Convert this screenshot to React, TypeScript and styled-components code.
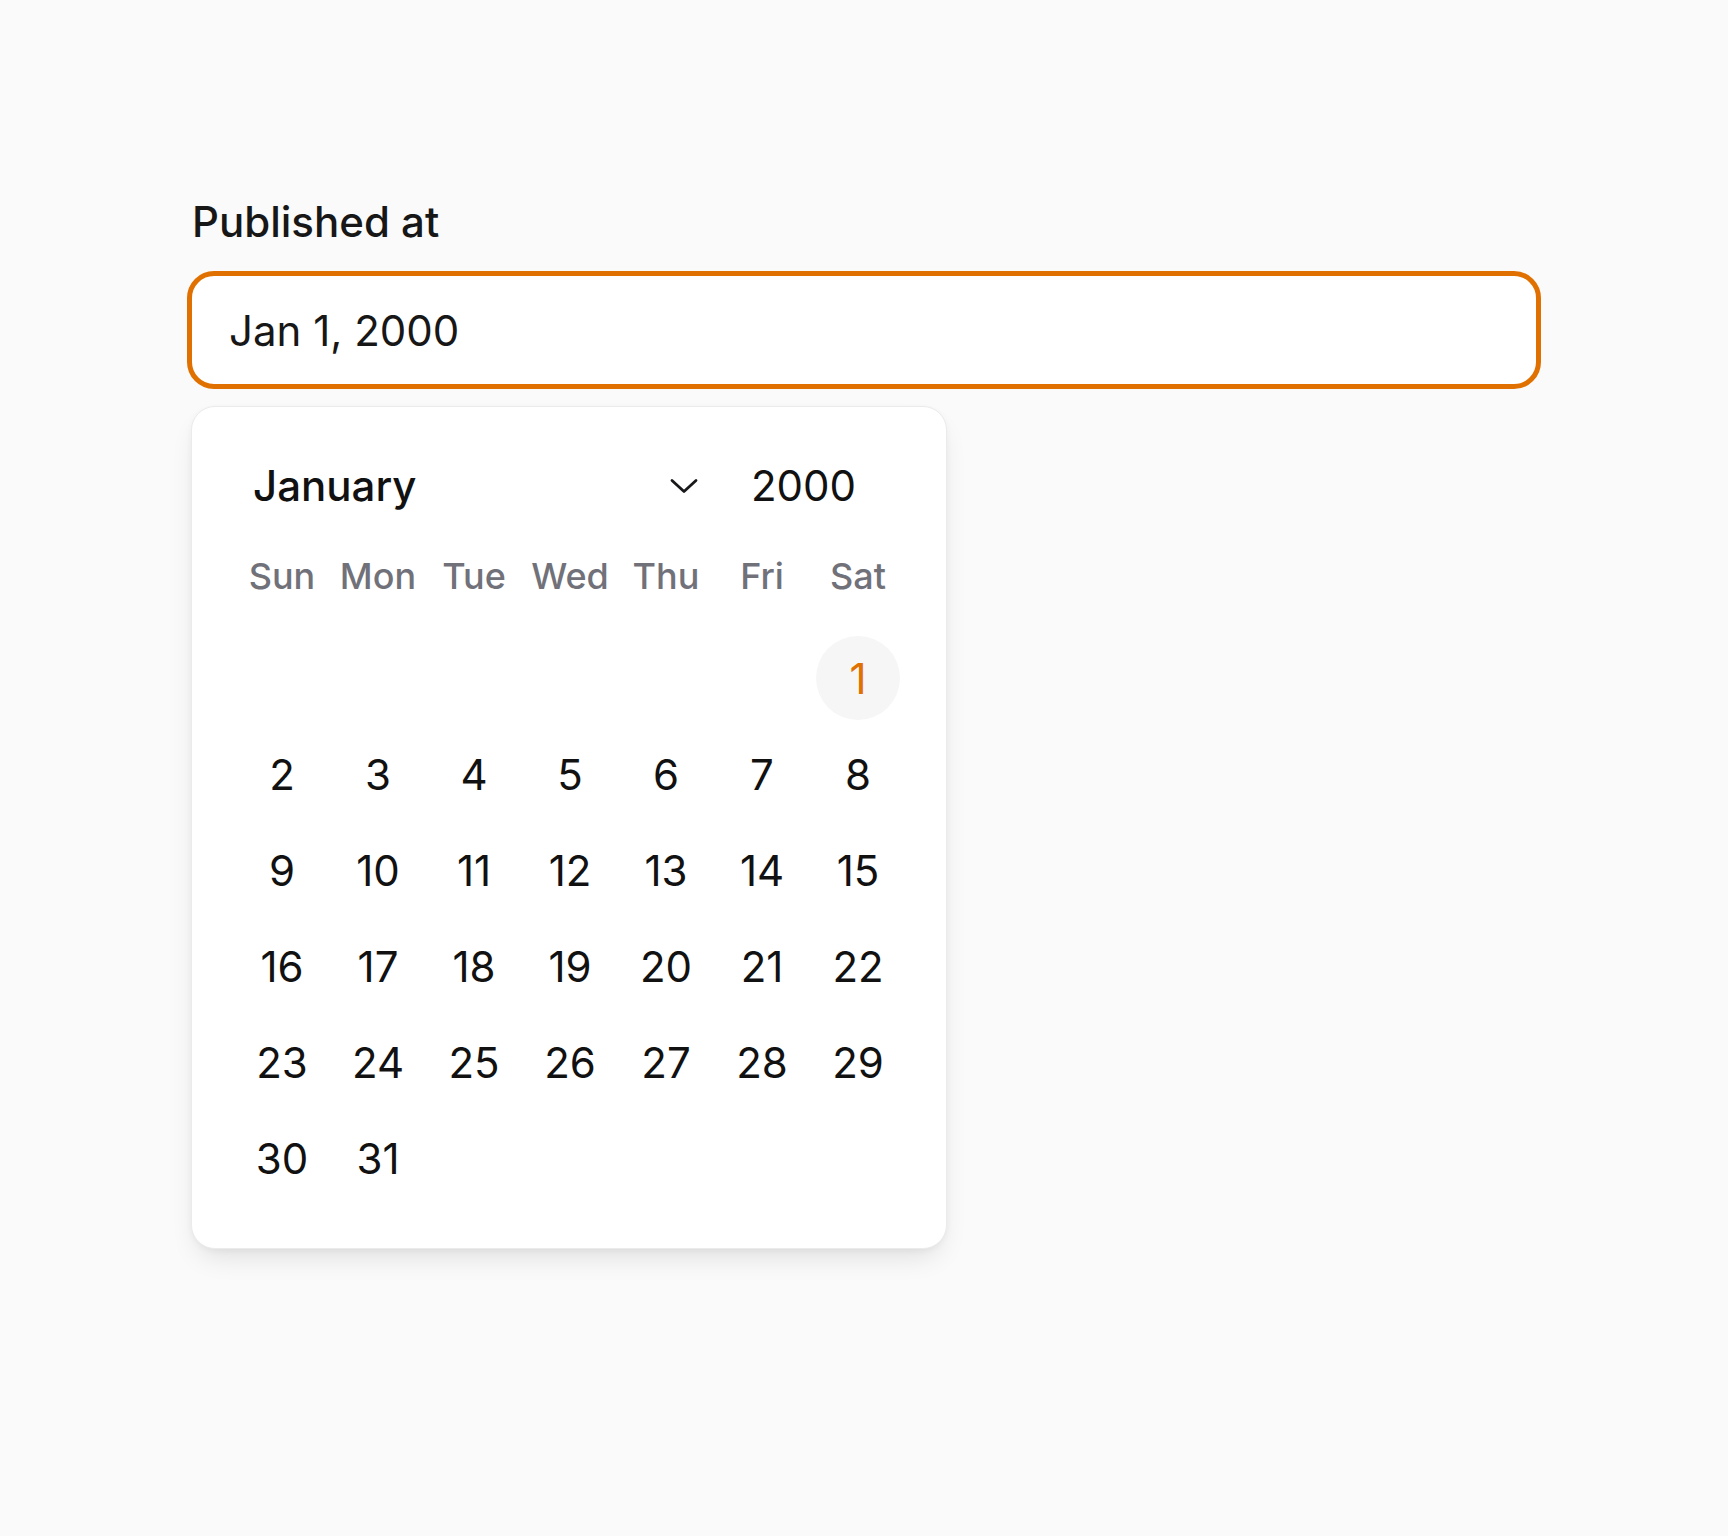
import React from "react";
import styled, { createGlobalStyle } from "styled-components";

const ORANGE = "#e07000";

const GlobalStyle = createGlobalStyle`
  html, body {
    margin: 0;
    padding: 0;
    background: #fafafa;
  }
  body {
    font-family: Inter, "Noto Sans", sans-serif;
    color: #171717;
    -webkit-font-smoothing: antialiased;
  }
  * { box-sizing: border-box; }
`;

const Page = styled.div`
  min-height: 1536px;
  padding: 192px 0 0 187px;
`;

const Field = styled.div`
  position: relative;
  width: 1354px;
  display: flex;
  flex-direction: column;
  gap: 19px;
`;

const Label = styled.label`
  padding-left: 5px;
  font-size: 42px;
  line-height: 60px;
  font-weight: 500;
  color: #171717;
`;

const Input = styled.div`
  height: 118px;
  display: flex;
  align-items: center;
  padding: 0 37px;
  background: #ffffff;
  border: 5px solid ${ORANGE};
  border-radius: 27px;
  font-size: 42px;
  font-weight: 400;
  color: #171717;
`;

const Popover = styled.div`
  position: absolute;
  top: calc(100% + 17px);
  left: 4px;
  width: 756px;
  padding: 49px 47px 48px 48px;
  background: #ffffff;
  border: 1px solid #ebebeb;
  border-radius: 24px;
  box-shadow: 0 14px 28px -8px rgba(0, 0, 0, 0.12), 0 2px 6px rgba(0, 0, 0, 0.04);
`;

const Header = styled.div`
  display: flex;
  align-items: center;
  height: 60px;
  margin-bottom: 36px;
`;

const MonthSelect = styled.div`
  width: 470px;
  display: flex;
  align-items: center;
  justify-content: space-between;
  padding: 0 12px 0 13px;
  font-size: 42px;
  line-height: 60px;
  font-weight: 500;
  color: #111111;
`;

const YearField = styled.div`
  margin-left: 29px;
  padding-left: 12px;
  font-size: 42px;
  line-height: 60px;
  font-weight: 400;
  color: #111111;
`;

const WeekRow = styled.div`
  display: grid;
  grid-template-columns: repeat(7, 84px);
  column-gap: 12px;
  height: 48px;
  margin-bottom: 36px;
`;

const WeekDay = styled.div`
  text-align: center;
  font-size: 36px;
  line-height: 48px;
  font-weight: 500;
  color: #71717a;
`;

const DayGrid = styled.div`
  display: grid;
  grid-template-columns: repeat(7, 84px);
  grid-auto-rows: 84px;
  gap: 12px;
`;

const Day = styled.div<{ $selected?: boolean }>`
  display: flex;
  align-items: center;
  justify-content: center;
  border-radius: 50%;
  font-size: 42px;
  font-weight: 400;
  color: ${(p) => (p.$selected ? ORANGE : "#111111")};
  background: ${(p) => (p.$selected ? "#f6f6f6" : "transparent")};
`;

const Chevron = () => (
  <svg width="28" height="16" viewBox="0 0 28 16" fill="none">
    <path d="M2 2.5 L14 13.5 L26 2.5" stroke="#18181b" strokeWidth="2.8" strokeLinecap="round" strokeLinejoin="round" />
  </svg>
);

const weekdays = ["Sun", "Mon", "Tue", "Wed", "Thu", "Fri", "Sat"];

export default function App() {
  const cells: (number | null)[] = [
    ...Array(6).fill(null),
    ...Array.from({ length: 31 }, (_, i) => i + 1),
  ];
  return (
    <>
      <GlobalStyle />
      <Page>
        <Field>
          <Label>Published at</Label>
          <Input>Jan 1, 2000</Input>
          <Popover>
            <Header>
              <MonthSelect>
                <span>January</span>
                <Chevron />
              </MonthSelect>
              <YearField>2000</YearField>
            </Header>
            <WeekRow>
              {weekdays.map((d) => (
                <WeekDay key={d}>{d}</WeekDay>
              ))}
            </WeekRow>
            <DayGrid>
              {cells.map((d, i) =>
                d === null ? <span key={"e" + i} /> : (
                  <Day key={d} $selected={d === 1}>{d}</Day>
                )
              )}
            </DayGrid>
          </Popover>
        </Field>
      </Page>
    </>
  );
}
